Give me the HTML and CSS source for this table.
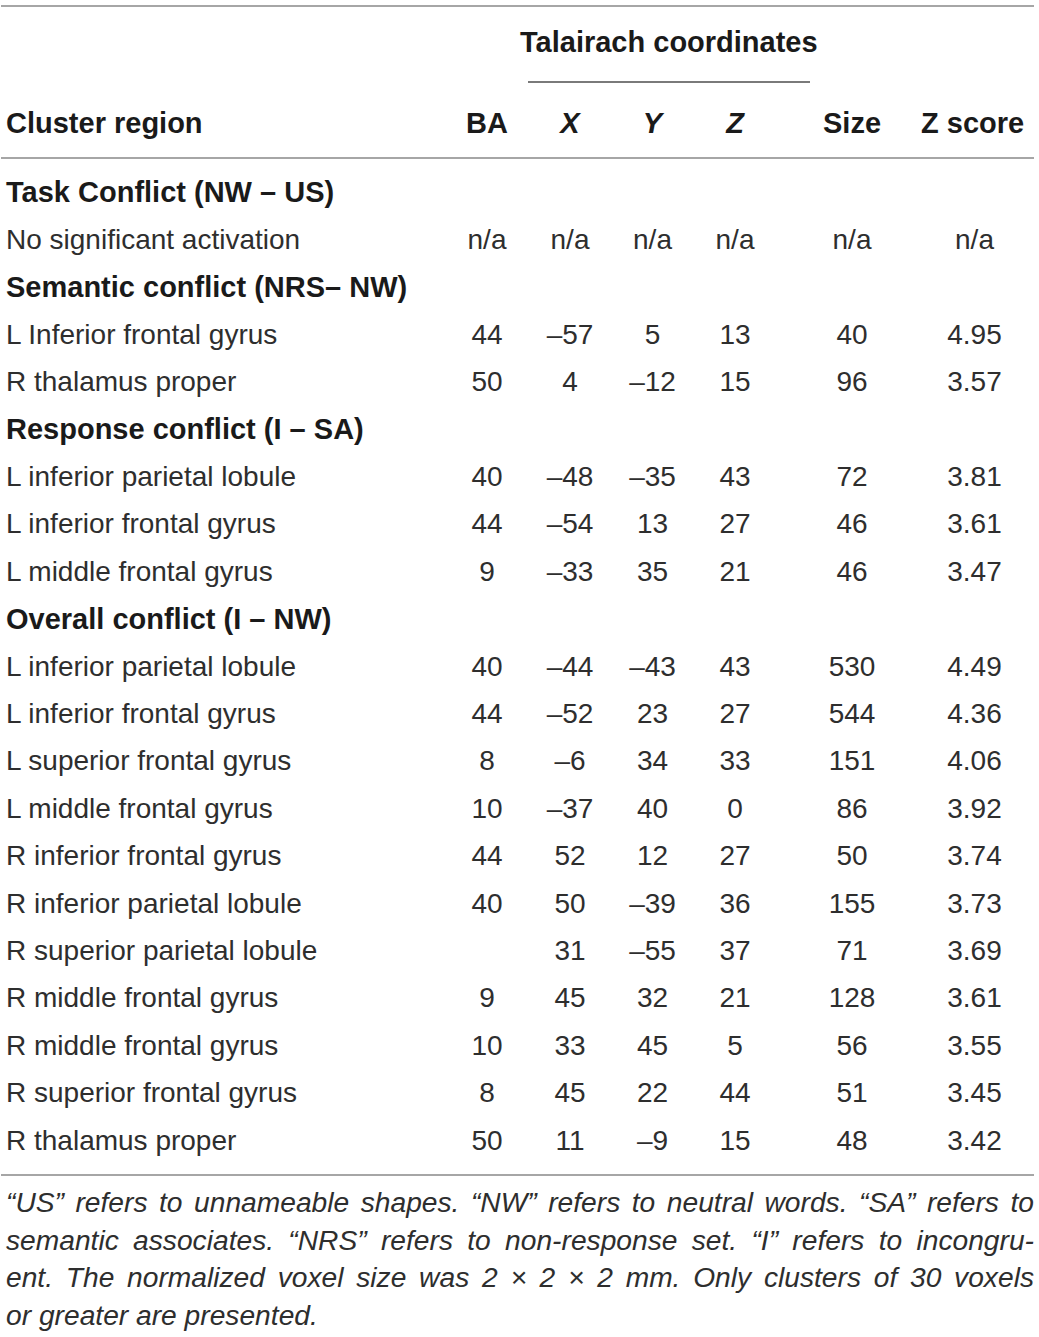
FILE: index.html
```html
<!DOCTYPE html>
<html>
<head>
<meta charset="utf-8">
<link rel="stylesheet" href="styles.css">
</head>
<body>
<div class="table">
  <div class="top-rule"></div>
  <div class="group-head">
    <div class="group-title">Talairach coordinates</div>
    <div class="group-rule"></div>
  </div>
  <div class="row head">
    <div class="c0">Cluster region</div>
    <div class="c">BA</div>
    <div class="c it">X</div>
    <div class="c it">Y</div>
    <div class="c it">Z</div>
    <div class="c">Size</div>
    <div class="c last">Z score</div>
  </div>
  <div class="mid-rule"></div>
  <div class="body">
    <div class="row sec"><div class="c0">Task Conflict (NW – US)</div></div>
    <div class="row"><div class="c0">No significant activation</div><div class="c">n/a</div><div class="c">n/a</div><div class="c">n/a</div><div class="c">n/a</div><div class="c">n/a</div><div class="c last">n/a</div></div>
    <div class="row sec"><div class="c0">Semantic conflict (NRS– NW)</div></div>
    <div class="row"><div class="c0">L Inferior frontal gyrus</div><div class="c">44</div><div class="c">–57</div><div class="c">5</div><div class="c">13</div><div class="c">40</div><div class="c last">4.95</div></div>
    <div class="row"><div class="c0">R thalamus proper</div><div class="c">50</div><div class="c">4</div><div class="c">–12</div><div class="c">15</div><div class="c">96</div><div class="c last">3.57</div></div>
    <div class="row sec"><div class="c0">Response conflict (I – SA)</div></div>
    <div class="row"><div class="c0">L inferior parietal lobule</div><div class="c">40</div><div class="c">–48</div><div class="c">–35</div><div class="c">43</div><div class="c">72</div><div class="c last">3.81</div></div>
    <div class="row"><div class="c0">L inferior frontal gyrus</div><div class="c">44</div><div class="c">–54</div><div class="c">13</div><div class="c">27</div><div class="c">46</div><div class="c last">3.61</div></div>
    <div class="row"><div class="c0">L middle frontal gyrus</div><div class="c">9</div><div class="c">–33</div><div class="c">35</div><div class="c">21</div><div class="c">46</div><div class="c last">3.47</div></div>
    <div class="row sec"><div class="c0">Overall conflict (I – NW)</div></div>
    <div class="row"><div class="c0">L inferior parietal lobule</div><div class="c">40</div><div class="c">–44</div><div class="c">–43</div><div class="c">43</div><div class="c">530</div><div class="c last">4.49</div></div>
    <div class="row"><div class="c0">L inferior frontal gyrus</div><div class="c">44</div><div class="c">–52</div><div class="c">23</div><div class="c">27</div><div class="c">544</div><div class="c last">4.36</div></div>
    <div class="row"><div class="c0">L superior frontal gyrus</div><div class="c">8</div><div class="c">–6</div><div class="c">34</div><div class="c">33</div><div class="c">151</div><div class="c last">4.06</div></div>
    <div class="row"><div class="c0">L middle frontal gyrus</div><div class="c">10</div><div class="c">–37</div><div class="c">40</div><div class="c">0</div><div class="c">86</div><div class="c last">3.92</div></div>
    <div class="row"><div class="c0">R inferior frontal gyrus</div><div class="c">44</div><div class="c">52</div><div class="c">12</div><div class="c">27</div><div class="c">50</div><div class="c last">3.74</div></div>
    <div class="row"><div class="c0">R inferior parietal lobule</div><div class="c">40</div><div class="c">50</div><div class="c">–39</div><div class="c">36</div><div class="c">155</div><div class="c last">3.73</div></div>
    <div class="row"><div class="c0">R superior parietal lobule</div><div class="c"></div><div class="c">31</div><div class="c">–55</div><div class="c">37</div><div class="c">71</div><div class="c last">3.69</div></div>
    <div class="row"><div class="c0">R middle frontal gyrus</div><div class="c">9</div><div class="c">45</div><div class="c">32</div><div class="c">21</div><div class="c">128</div><div class="c last">3.61</div></div>
    <div class="row"><div class="c0">R middle frontal gyrus</div><div class="c">10</div><div class="c">33</div><div class="c">45</div><div class="c">5</div><div class="c">56</div><div class="c last">3.55</div></div>
    <div class="row"><div class="c0">R superior frontal gyrus</div><div class="c">8</div><div class="c">45</div><div class="c">22</div><div class="c">44</div><div class="c">51</div><div class="c last">3.45</div></div>
    <div class="row"><div class="c0">R thalamus proper</div><div class="c">50</div><div class="c">11</div><div class="c">–9</div><div class="c">15</div><div class="c">48</div><div class="c last">3.42</div></div>
  </div>
  <div class="bottom-rule"></div>
  <div class="note">
    <span class="ln">“US” refers to unnameable shapes. “NW” refers to neutral words. “SA” refers to</span>
    <span class="ln">semantic associates. “NRS” refers to non-response set. “I” refers to incongru-</span>
    <span class="ln">ent. The normalized voxel size was 2 × 2 × 2 mm. Only clusters of 30 voxels</span>
    <span class="ln end">or greater are presented.</span>
  </div>
</div>
</body>
</html>
```
FILE: styles.css
```css
html, body {
  margin: 0;
  padding: 0;
  background: #fff;
}
body {
  font-family: "Liberation Sans", Arial, sans-serif;
  color: #2e2e2e;
}
.table {
  width: 1033px;
  margin-left: 1px;
}
.top-rule, .mid-rule, .bottom-rule {
  height: 2px;
  background: #a6a6a6;
}
.top-rule { margin-top: 5px; }
.group-head {
  height: 76px;
  display: flex;
  flex-direction: column;
  align-items: flex-start;
}
.group-title {
  margin-left: 519px;
  margin-top: 18px;
  font-weight: bold;
  font-size: 29px;
  line-height: 34px;
  color: #1a1a1a;
}
.group-rule {
  margin-left: 527px;
  margin-top: 22px;
  width: 282px;
  height: 1.5px;
  background: #7a7a7a;
}
.row {
  display: grid;
  grid-template-columns: 444px 84px 82px 83px 82px 152px 106px;
  height: 47.4px;
  align-items: center;
  font-size: 28px;
  white-space: nowrap;
}
.row.head {
  height: 74px;
  padding-top: 6px;
  box-sizing: border-box;
  font-weight: bold;
  color: #1a1a1a;
  font-size: 29px;
}
.c0 { padding-left: 5px; }
.c { text-align: center; }
.c.last { padding-right: 13px; }
.row.head .c.last {
  padding-right: 0;
  margin-left: -7px;
  text-align: left;
}
.it { font-style: italic; }
.row.sec {
  font-weight: bold;
  color: #1a1a1a;
  font-size: 29px;
}
.row.sec .c0 { grid-column: 1 / -1; }
.body {
  padding-top: 10px;
  padding-bottom: 10px;
}
.note {
  margin-top: 8px;
  padding-left: 5px;
  font-style: italic;
  font-size: 28.2px;
  line-height: 37.5px;
  color: #2e2e2e;
}
.ln {
  display: block;
  text-align: justify;
  text-align-last: justify;
  white-space: nowrap;
}
.ln.end { text-align-last: left; }
```
